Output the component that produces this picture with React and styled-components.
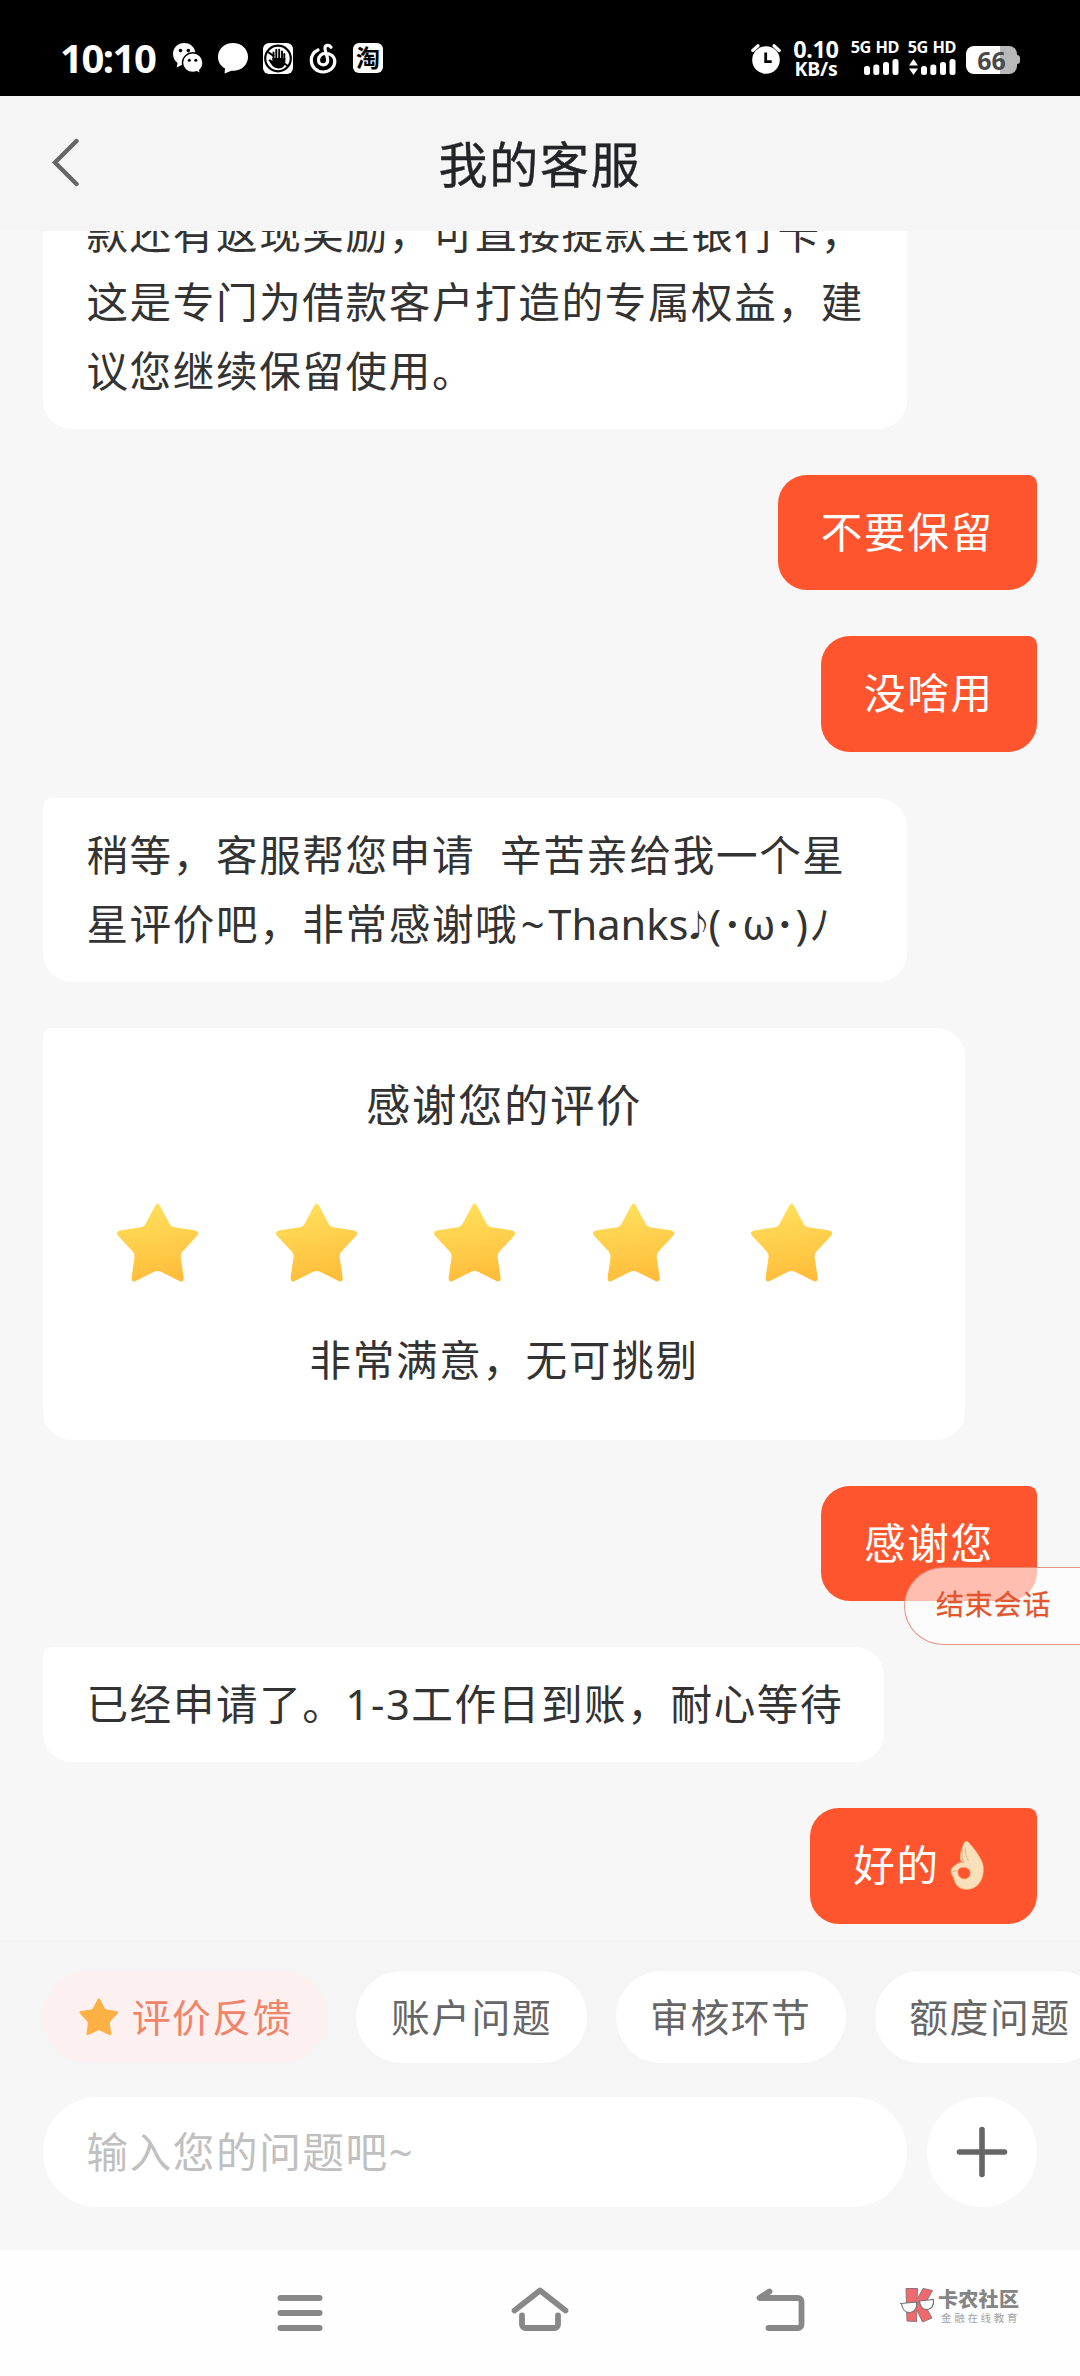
import React from "react";
import styled, { createGlobalStyle, css } from "styled-components";

const GlobalStyle = createGlobalStyle`
  *, *::before, *::after { box-sizing: border-box; }
  body {
    margin: 0;
    background: #f7f7f7;
    font-family: "Noto Sans", "Noto Sans CJK SC", sans-serif;
  }
`;

const Screen = styled.div`
  width: 1080px;
  height: 2376px;
  display: flex;
  flex-direction: column;
  overflow: hidden;
  background: #f7f7f7;
`;

/* ---------- status bar ---------- */

const StatusBar = styled.div`
  flex: none;
  height: 96px;
  padding: 39px 63px 0 60px;
  display: flex;
  justify-content: space-between;
  background: #000;
  color: #fff;
`;

const StatusLeft = styled.div`
  display: flex;
  align-items: center;
  height: 38px;
`;

const Clock = styled.span`
  width: 113px;
  font-size: 40px;
  font-weight: 700;
  line-height: 38px;
  letter-spacing: -1.5px;
  white-space: nowrap;
`;

const AppIcons = styled.div`
  display: flex;
  align-items: center;
  gap: 15px;
  svg { display: block; }
`;

const TaoBadge = styled.span`
  width: 30px;
  height: 30px;
  border-radius: 6px;
  background: #fff;
  color: #000;
  font-size: 24px;
  font-weight: 700;
  line-height: 29px;
  text-align: center;
`;

const StatusRight = styled.div`
  display: flex;
  align-items: flex-start;
`;

const AlarmSlot = styled.div`
  padding-top: 4px;
  margin-right: 11px;
  svg { display: block; }
`;

const NetSpeed = styled.div`
  width: 48px;
  margin-right: 10px;
  display: flex;
  flex-direction: column;
  align-items: center;
  font-weight: 700;
  white-space: nowrap;
`;

const SpeedValue = styled.span`
  font-size: 23.5px;
  line-height: 20px;
  letter-spacing: -0.4px;
`;

const SpeedUnit = styled.span`
  font-size: 19.5px;
  line-height: 20px;
  letter-spacing: -0.2px;
`;

const Sim = styled.div`
  width: 49px;
  margin-right: ${(p) => p.$gap}px;
  display: flex;
  flex-direction: column;
  align-items: flex-end;
`;

const SimLabel = styled.span`
  font-size: 16.3px;
  font-weight: 700;
  line-height: 17px;
  letter-spacing: -0.5px;
  word-spacing: 1px;
  white-space: nowrap;
`;

const Bars = styled.svg`
  display: block;
  margin-top: 2px;
`;

const Battery = styled.div`
  position: relative;
  width: 51px;
  height: 28px;
  margin-top: 7px;
  border-radius: 8px;
  background: linear-gradient(90deg, #fff 66%, #b9b9b9 66%);
  color: #4a4a4a;
  font-size: 25px;
  font-weight: 700;
  line-height: 28px;
  text-align: center;
  &::after {
    content: "";
    position: absolute;
    right: -3px;
    top: 9px;
    width: 4px;
    height: 9px;
    border-radius: 0 3px 3px 0;
    background: #b9b9b9;
  }
`;

/* ---------- header ---------- */

const Header = styled.header`
  flex: none;
  height: 135px;
  padding: 0 50px;
  display: grid;
  grid-template-columns: 40px 1fr 40px;
  align-items: center;
  background: #f5f5f5;
`;

const Back = styled.button`
  padding: 0 0 2px;
  border: 0;
  background: none;
  svg { display: block; }
`;

const Title = styled.h1`
  margin: 0;
  font-size: 49px;
  font-weight: 400;
  line-height: 70px;
  letter-spacing: 1.8px;
  text-align: center;
  color: #232427;
  -webkit-text-stroke: 0.4px #232427;
`;

/* ---------- chat ---------- */

const Chat = styled.main`
  flex: none;
  height: 1708.6px;
  padding: 0 43.2px 16px;
  display: flex;
  flex-direction: column;
  justify-content: flex-end;
  gap: 46.08px;
  overflow: hidden;
`;

const Bubble = styled.div`
  flex: none;
  max-width: 864px;
  padding: 23.04px 0 23.04px 43.2px;
  font-size: 41.6px;
  letter-spacing: 1.6px;
  line-height: 69.12px;
  white-space: pre;
  ${(p) =>
    p.$mine
      ? css`
          align-self: flex-end;
          padding-right: 43.2px;
          border-radius: 28.8px 8.64px 28.8px 28.8px;
          background: #ff552e;
          color: #fff;
        `
      : css`
          align-self: flex-start;
          width: ${p.$width || 864}px;
          border-radius: 8.64px 28.8px 28.8px 28.8px;
          background: #fff;
          color: #333;
        `}
`;

const Line = styled.div`
  height: 69.12px;
  display: flex;
`;

const Half = styled.span`
  width: ${(p) => p.$w}px;
  font-size: ${(p) => p.$size || 41.6}px;
  letter-spacing: 0;
  display: flex;
  justify-content: center;
`;

const OkHand = styled.svg`
  display: block;
  margin-top: 6.5px;
`;

const RatingCard = styled.section`
  flex: none;
  width: 921.6px;
  height: 411.8px;
  padding-top: 43px;
  display: flex;
  flex-direction: column;
  align-items: center;
  border-radius: 8.64px 28.8px 28.8px 28.8px;
  background: #fff;
  color: #333;
`;

const RatingTitle = styled.div`
  font-size: 44.4px;
  line-height: 69px;
  letter-spacing: 1.6px;
`;

const Stars = styled.div`
  align-self: flex-start;
  margin: 63px 0 0 74.3px;
  display: flex;
  gap: 76.4px;
  svg { display: block; flex: none; }
`;

const RatingNote = styled.div`
  margin-top: 43px;
  font-size: 41.6px;
  line-height: 69px;
  letter-spacing: 1.6px;
`;

const EndSession = styled.button`
  position: absolute;
  left: 904px;
  top: 1567px;
  width: 200px;
  height: 78px;
  padding: 0 0 4px 31px;
  border: 1.4px solid rgba(222, 120, 100, 0.8);
  border-radius: 39px 0 0 39px;
  background: rgba(255, 255, 255, 0.62);
  color: #e2562f;
  font-family: inherit;
  font-size: 28px;
  letter-spacing: 0.8px;
  line-height: 70px;
  text-align: left;
  -webkit-text-stroke: 0.3px #e2562f;
`;

const Viewport = styled.div`
  position: relative;
  width: 1080px;
  height: 2376px;
  overflow: hidden;
`;

/* ---------- bottom ---------- */

const QuickBar = styled.nav`
  flex: none;
  height: 140.4px;
  padding: 31.4px 0 0 43.2px;
  display: flex;
  align-items: flex-start;
  gap: 28.8px;
  overflow: hidden;
  background: #f5f5f5;
`;

const Chip = styled.button`
  flex: none;
  height: 92.16px;
  padding: 0 34.56px;
  display: flex;
  align-items: center;
  gap: 11px;
  border: 0;
  border-radius: 46.08px;
  background: ${(p) => (p.$accent ? "#fcf1f0" : "#fff")};
  color: ${(p) => (p.$accent ? "#f0836a" : "#666")};
  font-family: inherit;
  font-size: 38.8px;
  letter-spacing: 1.52px;
  line-height: 92px;
  white-space: nowrap;
  svg { display: block; }
`;

const InputBar = styled.div`
  flex: none;
  height: 170.4px;
  padding: 17px 43.2px 0;
  display: flex;
  gap: 20px;
  background: #f7f7f7;
`;

const Field = styled.div`
  width: 864px;
  height: 110px;
  padding-left: 43.2px;
  border-radius: 55px;
  background: #fff;
  color: #c0c0c0;
  font-size: 41.6px;
  letter-spacing: 1.6px;
  line-height: 110px;
`;

const AddButton = styled.button`
  width: 110px;
  height: 110px;
  padding: 0;
  display: flex;
  align-items: center;
  justify-content: center;
  border: 0;
  border-radius: 50%;
  background: #fff;
`;

const SystemNav = styled.footer`
  flex: 1;
  display: flex;
  align-items: flex-start;
  padding: 36px 0 0 274px;
  background: #fefefe;
  svg { display: block; flex: none; }
`;

const NavIcon = styled.svg`
  margin-right: ${(p) => p.$gap}px;
`;

const Watermark = styled.div`
  display: flex;
  gap: 2px;
  margin-top: 1px;
`;

const WatermarkText = styled.div`
  display: flex;
  flex-direction: column;
  white-space: nowrap;
`;

const MarkName = styled.span`
  font-size: 20px;
  font-weight: 900;
  line-height: 26px;
  letter-spacing: 0.3px;
  color: #858585;
`;

const MarkSub = styled.span`
  padding-left: 3px;
  font-size: 10.5px;
  line-height: 10px;
  letter-spacing: 2.7px;
  color: #a2a2a2;
`;

const WechatIcon = () => (
  <svg width="30" height="31" viewBox="0 0 30 31">
    <path fill="#fff" d="M11.300 0C5 0 0 4.600 0 11c0 4 1.800 6.800 4.600 9L3.700 24.500l5-2.500 3 .3C22 22 22.500 16 22.500 11 22.500 4.800 17.600 0 11.300 0z" />
    <circle cx="7.500" cy="7.600" r="1.800" />
    <circle cx="15.300" cy="7.600" r="1.800" />
    <path fill="#fff" stroke="#000" strokeWidth="1.400" d="M19.800 9.800c-5.700 0-10.300 4.300-10.300 9.900s4.600 9.800 10.300 9.800c1.400 0 2.800-.3 4-.8l3.800 2.200-.9-3.700c2-1.800 3.300-4.500 3.300-7.500 0-5.600-4.500-9.900-10.200-9.900z" />
    <circle cx="16.300" cy="17.300" r="1.500" />
    <circle cx="22.800" cy="17.300" r="1.500" />
  </svg>
);

const ChatIcon = () => (
  <svg width="30" height="31" viewBox="0 0 30 31">
    <path fill="#fff" d="M15 0C6.500 0 0 6 0 14c0 5 2.600 9 7 11.500L6.600 30.500 13.500 27.700c9.500.7 16.500-5.700 16.500-13.700S23.500 0 15 0z" />
  </svg>
);

const HandIcon = () => (
  <svg width="30" height="31" viewBox="0 0 30 31">
    <rect width="30" height="31" rx="6" fill="#fff" />
    <circle cx="15" cy="15.500" r="12.800" fill="none" stroke="#000" strokeWidth="2.200" />
    <path d="M10.500 17V9.500M13.300 16V6.800M16.200 16V6.800M19 16V8.500M21.300 17v-6" stroke="#000" strokeWidth="1.900" strokeLinecap="round" />
    <path d="M9.500 15h12.800v4c0 4-2.800 6.400-6.400 6.400-4 0-6-1.700-8-4.600l-2.400-3.500c1-1.300 2.600-.7 4 .8z" />
    <path d="M5 9l6 4.300M20 19.500l5.500 4" stroke="#000" strokeWidth="2" />
  </svg>
);

const MusicIcon = () => (
  <svg width="30" height="31" viewBox="-1.500 0 30 31">
    <path
      d="M21.500 4.200C19.500 1.500 15.300 1.800 15.500 5.500C15.700 8.500 18 13.500 18.200 17C18.300 20 16.200 21.800 13.700 21.800C11 21.800 9 19.800 9 17C9 13 12.500 10.300 16 10.300C21.500 10.300 25.300 13.800 25.300 18.500C25.300 24.300 20 29 13.700 29C7 29 1.800 24 1.800 17.500C1.800 12.700 4.500 8.800 8.500 7"
      fill="none"
      stroke="#fff"
      strokeWidth="3.200"
      strokeLinecap="round"
    />
  </svg>
);

const AlarmIcon = () => (
  <svg width="30" height="32" viewBox="0 0 30 32">
    <circle cx="15" cy="17" r="13.800" fill="#fff" />
    <path d="M1.800 7.500L7 2.800M28.200 7.500L23 2.800" stroke="#fff" strokeWidth="3.200" strokeLinecap="round" />
    <path d="M14.700 9.500v9.200h6" fill="none" stroke="#000" strokeWidth="2.800" />
  </svg>
);

const SignalBars = ({ traffic }) => (
  <Bars width="49" height="17" viewBox="0 0 49 17">
    {traffic && <path fill="#fff" d="M6.500 1l4.500 6.500H2zM6.500 17l4.500-6.500H2z" />}
    <g fill="#fff">
      <rect x="14" y="8" width="6" height="9" rx="2.500" />
      <rect x="23.300" y="6.500" width="6" height="10.500" rx="2.500" />
      <rect x="33" y="4" width="6" height="13" rx="2.500" />
      <rect x="42.500" y="1" width="6" height="16" rx="2.500" />
    </g>
  </Bars>
);

const STAR =
  "M37.800 3.500Q40.600 -2.500 43.400 3.500L53 21.500Q54.300 23.800 57 24.200L77 27.200Q84 28.600 79.500 33.500L65.500 48.500Q63.300 51 63.700 54.500L66.600 74Q67.300 80.500 61.500 77.500L44 68.800Q40.600 67.200 37.200 68.800L19.700 77.500Q14 80.500 14.700 74L17.500 54.500Q17.900 51 15.700 48.500L1.700 33.500Q-2.800 28.600 4.200 27.200L24.200 24.200Q26.900 23.800 28.200 21.500Z";

const GoldStar = ({ id }) => (
  <svg width="82" height="80" viewBox="0 0 82 80">
    <defs>
      <linearGradient id={id} x1="0.400" y1="0" x2="0.600" y2="1">
        <stop offset="0" stopColor="#ffe05c" />
        <stop offset="1" stopColor="#ffbc3a" />
      </linearGradient>
    </defs>
    <path d={STAR} fill={`url(#${id})`} />
  </svg>
);

const LogoMark = () => (
  <svg width="36" height="37" viewBox="0 0 36 37">
    <path fill="#f0696f" stroke="#8d7476" strokeWidth="1" d="M6 1.500h11.500l-.5 11 6-11 9.500 2-8 14 7.500 13.500-9.500 4-5.500-12-.5 11.500-9.500-.5z" />
    <path fill="#fff" stroke="#777" strokeWidth="1.200" d="M1.500 16.500l15-1.500c1 6-2 10-6.500 10.500-5 .3-8-3.500-8.500-9zM19.500 14l14-1.500c.5 6-2 9.500-6 10-4.500.3-7.500-3-8-8.500z" />
    <path stroke="#777" strokeWidth="1.200" d="M0 16.500l1.500 0M16.500 16l3-1" />
  </svg>
);

const REPLIES = ["账户问题", "审核环节", "额度问题"];

export default function App() {
  return (
    <Viewport lang="zh-CN">
      <GlobalStyle />
      <Screen>
        <StatusBar>
          <StatusLeft>
            <Clock>10:10</Clock>
            <AppIcons>
              <WechatIcon />
              <ChatIcon />
              <HandIcon />
              <MusicIcon />
              <TaoBadge>淘</TaoBadge>
            </AppIcons>
          </StatusLeft>
          <StatusRight>
            <AlarmSlot>
              <AlarmIcon />
            </AlarmSlot>
            <NetSpeed>
              <SpeedValue>0.10</SpeedValue>
              <SpeedUnit>KB/s</SpeedUnit>
            </NetSpeed>
            <Sim $gap={8}>
              <SimLabel>5G HD</SimLabel>
              <SignalBars />
            </Sim>
            <Sim $gap={10}>
              <SimLabel>5G HD</SimLabel>
              <SignalBars traffic />
            </Sim>
            <Battery>66</Battery>
          </StatusRight>
        </StatusBar>

        <Header>
          <Back aria-label="返回">
            <svg width="30" height="50" viewBox="0 0 30 50">
              <path d="M26.500 3L5 24.500l21.500 21.500" fill="none" stroke="#666" strokeWidth="4.400" strokeLinecap="round" />
            </svg>
          </Back>
          <Title>我的客服</Title>
        </Header>

        <Chat>
          <Bubble>
            <Line>款还有返现奖励，可直接提款至银行卡，</Line>
            <Line>这是专门为借款客户打造的专属权益，建</Line>
            <Line>议您继续保留使用。</Line>
          </Bubble>
          <Bubble $mine>不要保留</Bubble>
          <Bubble $mine>没啥用</Bubble>
          <Bubble>
            <Line>稍等，客服帮您申请{"  "}辛苦亲给我一个星</Line>
            <Line>
              <span>星评价吧，非常感谢哦</span>
              <Half $w={28.5}>~</Half>
              <Half $w={143}>Thanks</Half>
              <Half $w={17} $size={30}>♪</Half>
              <Half $w={16}>(</Half>
              <Half $w={19}>･</Half>
              <Half $w={34}>ω</Half>
              <Half $w={18}>･</Half>
              <Half $w={16}>)</Half>
              <Half $w={20}>ﾉ</Half>
            </Line>
          </Bubble>
          <RatingCard>
            <RatingTitle>感谢您的评价</RatingTitle>
            <Stars>
              {["s1", "s2", "s3", "s4", "s5"].map((id) => (
                <GoldStar key={id} id={id} />
              ))}
            </Stars>
            <RatingNote>非常满意，无可挑剔</RatingNote>
          </RatingCard>
          <Bubble $mine>感谢您</Bubble>
          <Bubble $width={841}>已经申请了。1-3工作日到账，耐心等待</Bubble>
          <Bubble $mine>
            <Line>
              好的
              <OkHand width="54" height="56" viewBox="0 0 54 56">
                <path
                  fill="#f9dfba"
                  stroke="#eebb88"
                  strokeWidth="0.8"
                  fillRule="evenodd"
                  d="M26 3.300C27.500 3.200 28.300 4 29.500 5.500C33 9.500 36 13 38.500 17.500C42 23 44 28 43.200 34C42.500 44 36 51.300 27 51.300C19 51.300 15.500 47.500 14 41C13.500 38 11.200 36.500 11 33.500C11 30 14 28 18 25.500C20 24.200 22 24.300 24 25L20.800 22.500C20 19 20.500 14 22.500 9.500C23.500 6.500 24 3.700 26 3.300ZM23.500 29.300C19.500 29.300 17.500 31.500 17.700 34.500C18 38.500 20.800 41 24.500 41C28 41 30.300 38.500 30.300 35C30.300 31.500 27.500 29.300 23.500 29.300Z"
                />
                <path fill="none" stroke="#e6b684" strokeWidth="1" d="M22.500 11c-.7 5-.5 9 1.200 13.500M25.500 9.500c-.5 5 .5 9.500 3 13.500M12.500 33.500l4.500-1" />
              </OkHand>
            </Line>
          </Bubble>
        </Chat>

        <QuickBar>
          <Chip $accent>
            <svg width="43" height="40" viewBox="-3 -2 90 84">
              <path d={STAR} fill="#fdb044" />
            </svg>
            评价反馈
          </Chip>
          {REPLIES.map((label) => (
            <Chip key={label}>{label}</Chip>
          ))}
        </QuickBar>

        <InputBar>
          <Field>输入您的问题吧~</Field>
          <AddButton aria-label="更多">
            <svg width="52" height="52" viewBox="0 0 52 52">
              <path d="M26 3.500v45M3.500 26h45" stroke="#666" strokeWidth="5.600" strokeLinecap="round" />
            </svg>
          </AddButton>
        </InputBar>

        <SystemNav>
          <NavIcon $gap={180} width="52" height="50" viewBox="274 2286 52 50">
            <path d="M280.500 2298h39M280.500 2313h39M280.500 2328h39" stroke="#888" strokeWidth="6" strokeLinecap="round" />
          </NavIcon>
          <NavIcon $gap={178} width="68" height="50" viewBox="506 2286 68 50">
            <path d="M514.500 2310.500l25.500-20 25.500 20M522 2315.500v9a3.500 3.500 0 0 0 3.500 3.500h29a3.500 3.500 0 0 0 3.500-3.500v-9" fill="none" stroke="#888" strokeWidth="5.800" strokeLinecap="round" strokeLinejoin="round" />
          </NavIcon>
          <NavIcon $gap={88} width="60" height="50" viewBox="752 2286 60 50">
            <path d="M769.500 2291.500l-10 6.500h38.500a3.500 3.500 0 0 1 3.500 3.500v23a3.500 3.500 0 0 1-3.500 3.500h-29.500" fill="none" stroke="#888" strokeWidth="5.800" strokeLinecap="round" strokeLinejoin="round" />
          </NavIcon>
          <Watermark>
            <LogoMark />
            <WatermarkText>
              <MarkName>卡农社区</MarkName>
              <MarkSub>金融在线教育</MarkSub>
            </WatermarkText>
          </Watermark>
        </SystemNav>
      </Screen>
      <EndSession>结束会话</EndSession>
    </Viewport>
  );
}
